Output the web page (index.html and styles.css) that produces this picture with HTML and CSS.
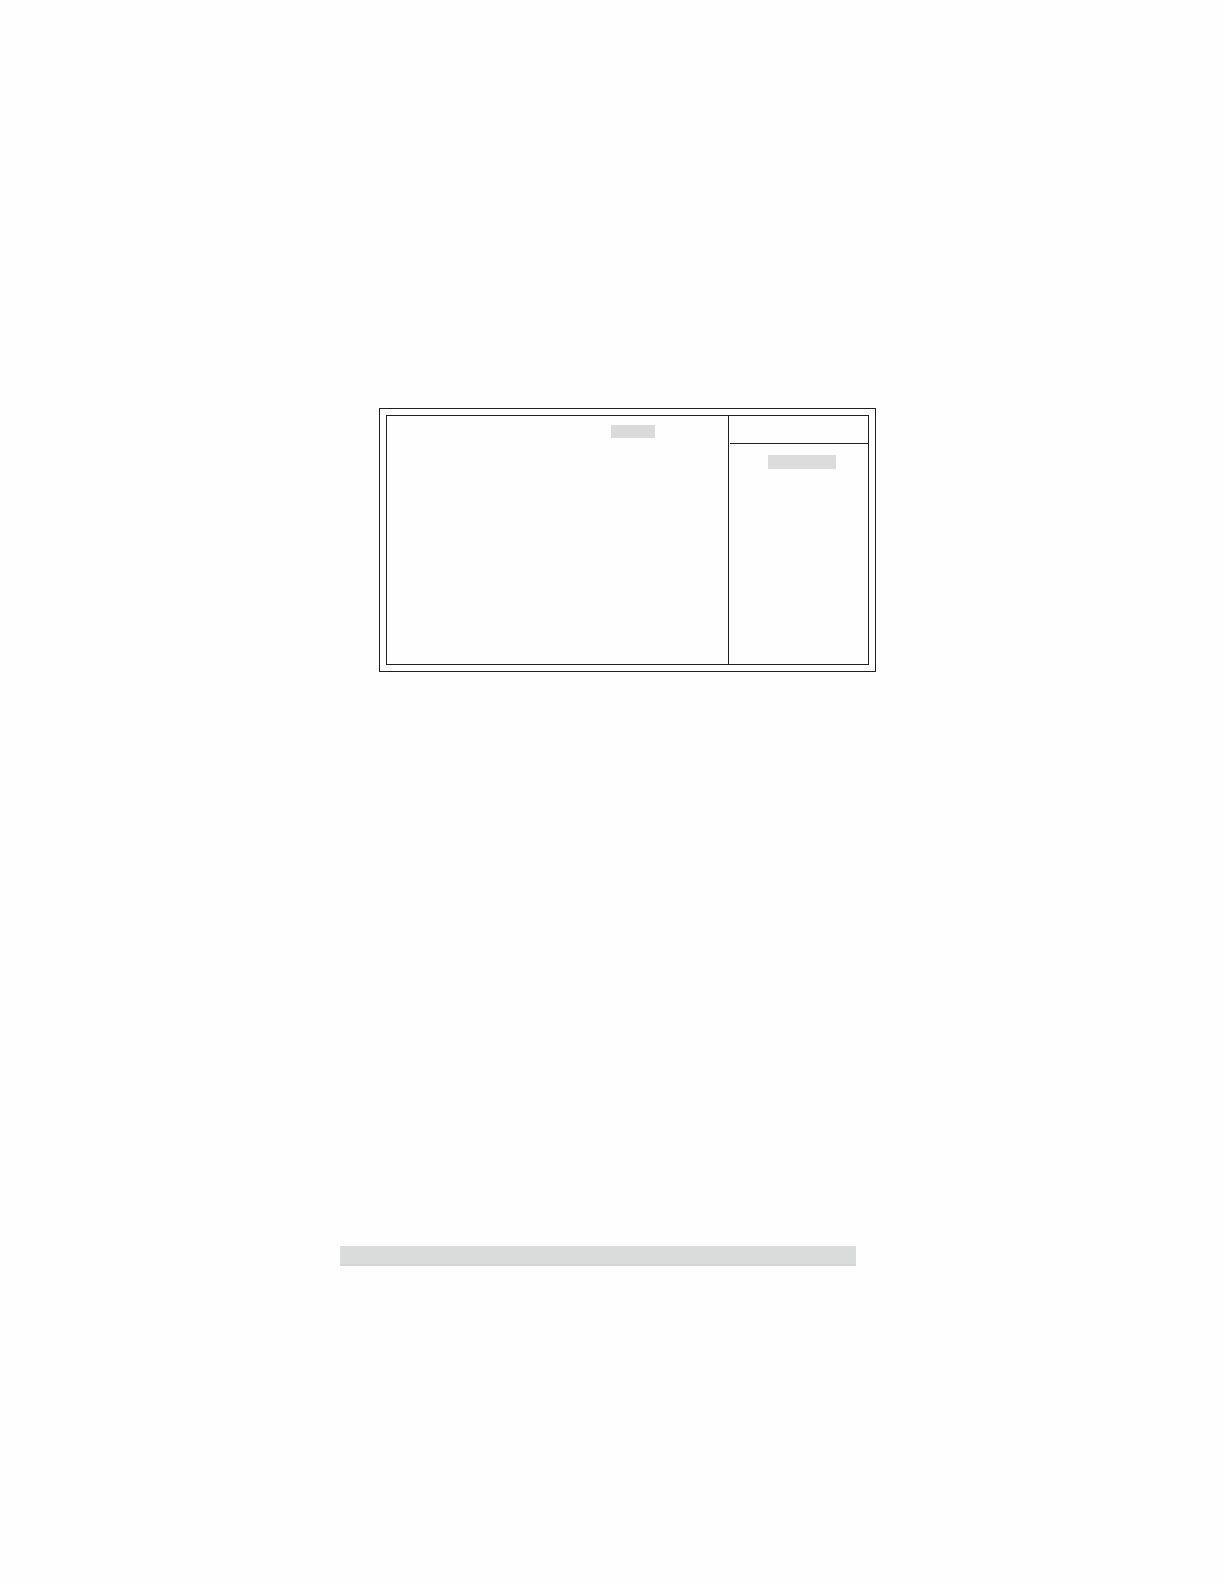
FILE: index.html
```html
<!DOCTYPE html>
<html lang="en">
<head>
<meta charset="utf-8">
<meta name="viewport" content="width=device-width, initial-scale=1">
<title>Setup screen</title>
<link rel="stylesheet" href="styles.css">
</head>
<body>
<main class="sheet">
  <section class="screen">
    <div class="frame">
      <div class="settings"><div class="selected-value"></div></div>
      <aside class="help">
        <div class="help-title"></div>
        <div class="help-body"><div class="selected-option"></div></div>
      </aside>
    </div>
  </section>
  <div class="note-bar"></div>
</main>
</body>
</html>
```

FILE: styles.css
```css
* {
  box-sizing: border-box;
}

body {
  margin: 0;
  background: #fefefe;
  font-family: "Liberation Sans", sans-serif;
}

.sheet {
  display: flex;
  flex-direction: column;
  gap: 574px;
  max-width: 544px;
  min-height: 100vh;
  margin: 0 auto;
  padding-top: 408px;
}

/* Double-ruled setup screen */
.screen {
  margin: 0 8px 0 39px;
  padding: 6px;
  border: 1px solid #231f20;
}

.frame {
  display: grid;
  grid-template-columns: minmax(0, 341fr) minmax(0, 140fr);
  min-height: 250px;
  border: 1px solid #231f20;
}

.settings {
  padding: 9px 73px 0 0;
}

.selected-value {
  width: 44px;
  height: 13px;
  margin-left: auto;
  background: #dadada;
}

.help {
  border-left: 1px solid #231f20;
}

.help-title {
  height: 28px;
  margin-left: 1px;
  border-bottom: 1px solid #231f20;
}

.help-body {
  padding: 11px 32px 0 39px;
}

.selected-option {
  height: 14px;
  background: #dcdcdc;
}

.note-bar {
  height: 20px;
  margin-right: 28px;
  border-bottom: 2px solid #d5d6d5;
  background: #d9dcdb;
}
```
